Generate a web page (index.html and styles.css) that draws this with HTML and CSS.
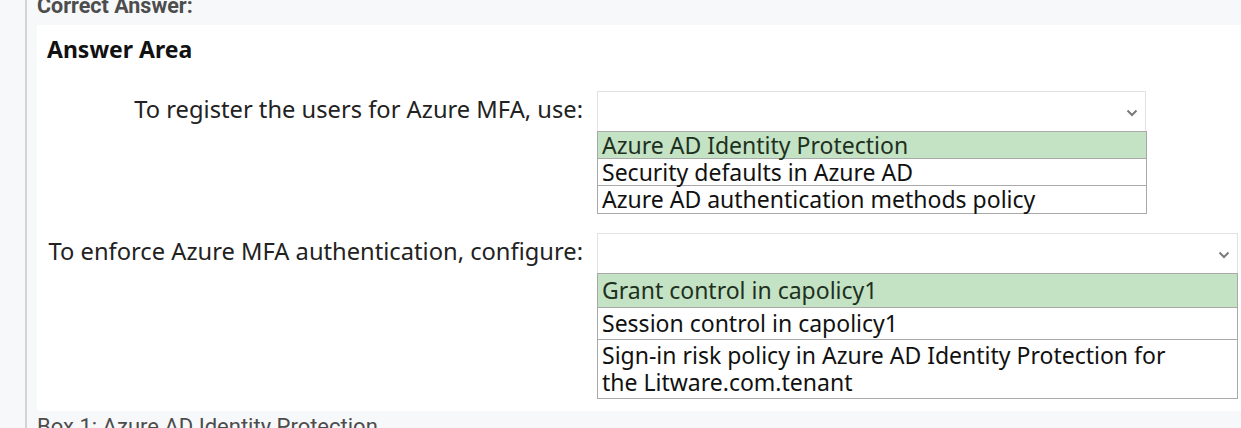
FILE: index.html
```html
<!DOCTYPE html>
<html lang="en">
<head>
<meta charset="utf-8">
<title>Correct Answer</title>
<link rel="stylesheet" href="styles.css">
</head>
<body>
<div class="explanation">
  <div class="heading">Correct Answer:</div>
  <div class="answer-area">
    <div class="area-title">Answer Area</div>
    <div class="grid">
      <div class="label">To register the users for Azure MFA, use:</div>
      <div class="select-col narrow">
        <div class="select-box">
          <svg class="chev" width="12" height="8" viewBox="0 0 12 8"><path d="M1.5 1.5 L6 6 L10.5 1.5" fill="none" stroke="#7a7a7a" stroke-width="2"/></svg>
        </div>
        <div class="options short">
          <div class="opt correct">Azure AD Identity Protection</div>
          <div class="opt">Security defaults in Azure AD</div>
          <div class="opt">Azure AD authentication methods policy</div>
        </div>
      </div>
      <div class="label">To enforce Azure MFA authentication, configure:</div>
      <div class="select-col wide">
        <div class="select-box">
          <svg class="chev" width="12" height="8" viewBox="0 0 12 8"><path d="M1.5 1.5 L6 6 L10.5 1.5" fill="none" stroke="#7a7a7a" stroke-width="2"/></svg>
        </div>
        <div class="options tall">
          <div class="opt correct">Grant control in capolicy1</div>
          <div class="opt">Session control in capolicy1</div>
          <div class="opt">Sign-in risk policy in Azure AD Identity Protection for the Litware.com.tenant</div>
        </div>
      </div>
    </div>
  </div>
  <p class="box-note">Box 1: Azure AD Identity Protection</p>
</div>
</body>
</html>
```

FILE: styles.css
```css
html, body {
  margin: 0;
  padding: 0;
  background: #f7f8fa;
  overflow: hidden;
}

.explanation {
  margin-left: 25px;
  border-left: 2px solid #d4d4d4;
  padding-left: 10px;
  height: 428px;
  overflow: hidden;
  font-family: Roboto, "Liberation Sans", sans-serif;
  color: #4d4d4d;
}

.heading {
  font-weight: 700;
  font-size: 21.5px;
  line-height: 22px;
  margin-top: -5px;
  height: 30px;
}

.answer-area {
  background: #ffffff;
  height: 386px;
  padding-left: 10px;
  font-family: "Noto Sans", "Open Sans", sans-serif;
  color: #1a1a1a;
  box-sizing: border-box;
}

.area-title {
  font-weight: 700;
  font-size: 23px;
  line-height: 28px;
  padding-top: 10px;
  color: #111;
}

.grid {
  display: grid;
  grid-template-columns: 536px auto;
  column-gap: 14px;
  row-gap: 19px;
  margin-top: 28px;
  align-items: start;
}

.label {
  text-align: right;
  font-size: 23.7px;
  line-height: 30px;
  padding-top: 3px;
  color: #222;
  white-space: nowrap;
}

.select-col.narrow { width: 550px; }
.select-col.wide { width: 641px; }

.select-box {
  height: 40px;
  box-sizing: border-box;
  border: 1px solid #e2e2e2;
  border-bottom: none;
  display: flex;
  align-items: center;
  justify-content: flex-end;
  padding-right: 7px;
}

.narrow .select-box { margin-right: 1px; }

.chev { display: block; margin-top: 3px; }

.options {
  border: 1px solid #a9a9a9;
}

.opt {
  font-size: 23px;
  line-height: 27px;
  padding: 0 4px;
  color: #111;
}

.options.short .opt { line-height: 26px; }
.options.short .opt:last-child { padding-bottom: 1px; }

.opt + .opt { border-top: 1px solid #a9a9a9; }

.opt.correct {
  background: #c4e2c4;
  color: #1e301e;
}

.options.tall .opt {
  padding: 2px 40px 2px 4px;
}

.options.tall .opt:first-child {
  padding-top: 3px;
  padding-bottom: 3px;
}

.options.tall .opt:last-child {
  padding-bottom: 2px;
}

.box-note {
  margin: 3px 0 0;
  font-size: 22px;
  line-height: 26px;
  color: #4d4d4d;
}
```
